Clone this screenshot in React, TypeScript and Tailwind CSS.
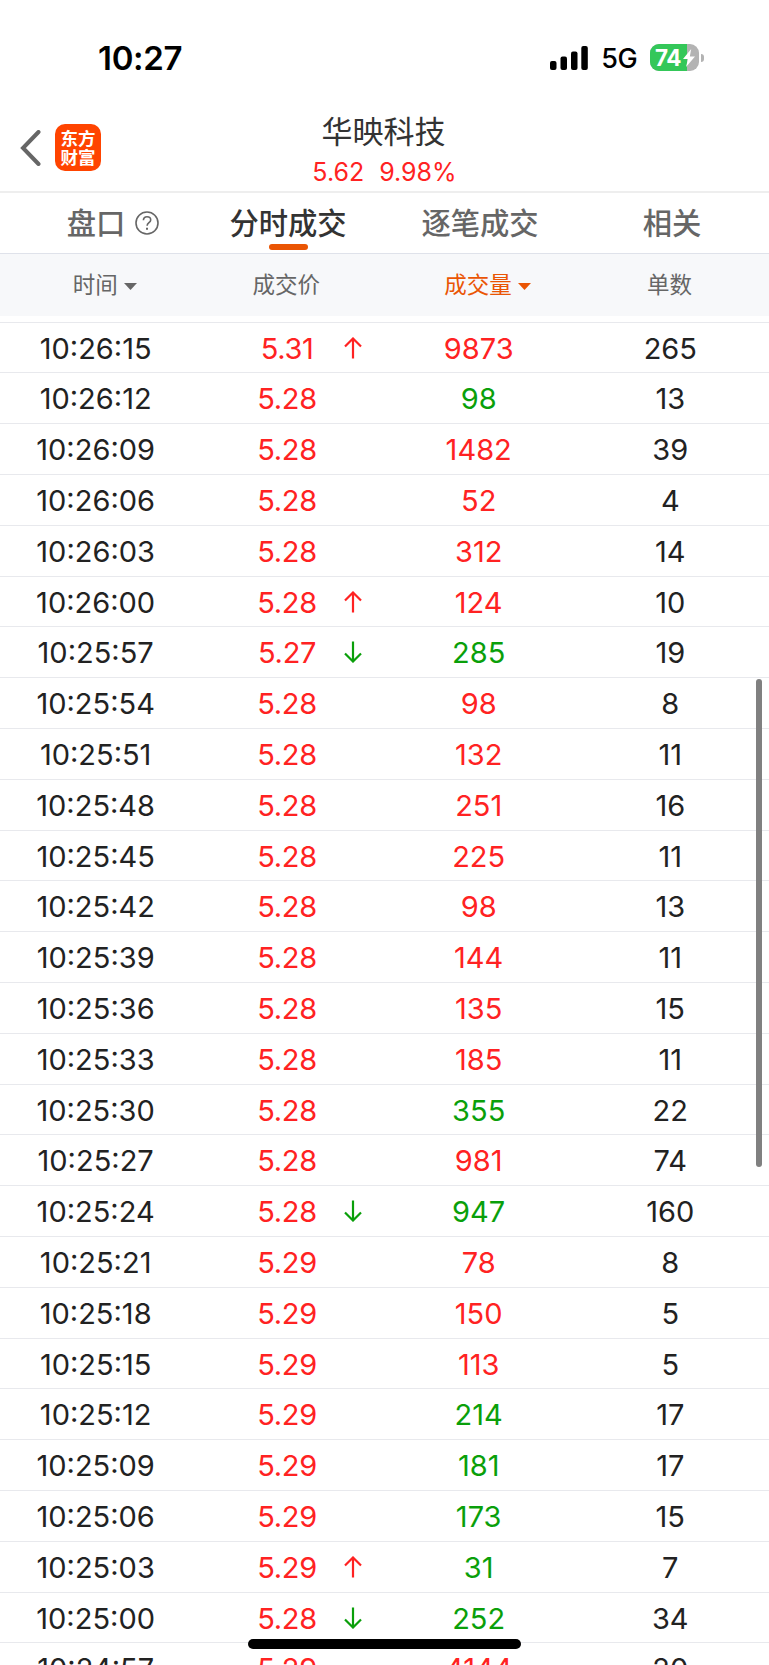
type Dir = "up" | "down" | ""
type Tick = [time: string, price: string, dir: Dir, volume: number, side: "buy" | "sell", count: number]

const ticks: Tick[] = [
  ["10:26:15", "5.31", "up", 9873, "buy", 265],
  ["10:26:12", "5.28", "", 98, "sell", 13],
  ["10:26:09", "5.28", "", 1482, "buy", 39],
  ["10:26:06", "5.28", "", 52, "buy", 4],
  ["10:26:03", "5.28", "", 312, "buy", 14],
  ["10:26:00", "5.28", "up", 124, "buy", 10],
  ["10:25:57", "5.27", "down", 285, "sell", 19],
  ["10:25:54", "5.28", "", 98, "buy", 8],
  ["10:25:51", "5.28", "", 132, "buy", 11],
  ["10:25:48", "5.28", "", 251, "buy", 16],
  ["10:25:45", "5.28", "", 225, "buy", 11],
  ["10:25:42", "5.28", "", 98, "buy", 13],
  ["10:25:39", "5.28", "", 144, "buy", 11],
  ["10:25:36", "5.28", "", 135, "buy", 15],
  ["10:25:33", "5.28", "", 185, "buy", 11],
  ["10:25:30", "5.28", "", 355, "sell", 22],
  ["10:25:27", "5.28", "", 981, "buy", 74],
  ["10:25:24", "5.28", "down", 947, "sell", 160],
  ["10:25:21", "5.29", "", 78, "buy", 8],
  ["10:25:18", "5.29", "", 150, "buy", 5],
  ["10:25:15", "5.29", "", 113, "buy", 5],
  ["10:25:12", "5.29", "", 214, "sell", 17],
  ["10:25:09", "5.29", "", 181, "sell", 17],
  ["10:25:06", "5.29", "", 173, "sell", 15],
  ["10:25:03", "5.29", "up", 31, "sell", 7],
  ["10:25:00", "5.28", "down", 252, "sell", 34],
  ["10:24:57", "5.29", "", 4144, "buy", 20],
]

export default function App() {
  return (
    <main className="relative flex h-[1665px] w-[769px] flex-col overflow-hidden bg-white font-['Inter','Noto_Sans_CJK_SC',sans-serif] text-[#222]">
      <StatusBar />
      <Header />
      <Tabs />
      <Columns />
      <div className="h-[5.6px] shrink-0" />
      <section>
        {ticks.map((t) => (
          <Row key={t[0]} tick={t} />
        ))}
      </section>

      {/* scrollbar + home indicator */}
      <div className="absolute top-[679px] right-[7px] h-[488px] w-[6px] rounded-full bg-[#808080]" />
      <div className="absolute bottom-[16px] left-[248px] h-[10px] w-[273px] rounded-full bg-black" />
    </main>
  )
}

function StatusBar() {
  return (
    <div className="flex h-[115px] shrink-0 items-center pr-[65px] pl-[98px] text-black">
      <span className="flex-1 pt-px text-[33px] leading-none font-semibold tracking-[-0.3px]">10:27</span>
      <svg className="mr-[13px]" width="38" height="24" viewBox="0 0 38 24">
        <rect x="0" y="15" width="6.5" height="9" rx="2" />
        <rect x="10.5" y="10.5" width="6.5" height="13.5" rx="2" />
        <rect x="21" y="5.5" width="6.5" height="18.5" rx="2" />
        <rect x="31.3" y="0" width="6.5" height="24" rx="2" />
      </svg>
      <span className="mr-[13px] pt-[2px] text-[27px] leading-none font-medium tracking-[-0.6px]">5G</span>
      <div className="relative h-[27px] w-[49px] overflow-hidden rounded-[9px] bg-[#b3b3b3]">
        <div className="h-full w-[37px] bg-[#34c759]" />
        <span className="absolute top-0 left-[5px] text-[22.5px] leading-[27px] font-bold tracking-[-0.6px] text-white">74</span>
        <svg className="absolute top-[5px] left-[33px]" width="12" height="18" viewBox="0 0 12 18">
          <path d="M8.2 0 0 10H5L3 18 12 7.4H6.8Z" fill="#fff" />
        </svg>
      </div>
      <div className="ml-[2px] h-[8px] w-[3px] rounded-r-full bg-[#b3b3b3]" />
    </div>
  )
}

function Header() {
  return (
    <header className="relative h-[78px] shrink-0 border-b-2 border-[#eee]">
      <div className="absolute top-[9px] left-[20px] flex items-center gap-[14px]">
        <svg width="21" height="36" viewBox="0 0 21 36" fill="none" stroke="#666" strokeWidth="4">
          <path d="M18.5 2 3 18 18.5 34" strokeLinecap="round" />
        </svg>
        <div className="flex h-[47px] w-[46px] flex-col items-center justify-center rounded-[10px] bg-[#ff4400] text-[17.5px] leading-[19px] font-bold text-white">
          <span>东方</span>
          <span>财富</span>
        </div>
      </div>
      <div className="flex flex-col items-center">
        <h1 className="mr-[2px] text-[31px] leading-[34px] text-[#333]">华映科技</h1>
        <div className="mt-[8px] flex gap-[15px] text-[25px] leading-[30px] text-[#f22]">
          <span>5.62</span>
          <span>9.98%</span>
        </div>
      </div>
    </header>
  )
}

function Tabs() {
  return (
    <nav className="grid h-[61px] w-full shrink-0 grid-cols-[192px_192px_192px_192px] border-b border-[#dfe2ea] text-[29.3px] leading-[62px] font-medium text-[#666]">
      <div className="text-center">
        <span className="relative">
          盘口
          <svg className="absolute top-[5px] left-[68px]" width="24" height="24" viewBox="0 0 24 24" fill="none" stroke="#666" strokeWidth="1.6">
            <circle cx="12" cy="12" r="11" />
            <path d="M8.4 9.3c0-2.2 1.5-3.6 3.6-3.6s3.7 1.3 3.7 3.2c0 2.7-3.6 2.9-3.6 5.8" />
            <path d="M12 16.7v2" strokeWidth="2" />
          </svg>
        </span>
      </div>
      <div className="relative text-center text-[#333]">
        分时成交
        <i className="absolute top-[51px] left-[77px] h-[6px] w-[39px] rounded-full bg-[#ea5504]" />
      </div>
      <div className="text-center">逐笔成交</div>
      <div className="text-center">相关</div>
    </nav>
  )
}

function Columns() {
  return (
    <div className="grid h-[62px] w-full shrink-0 grid-cols-[190.5px_191.6px_191.6px_191.6px] bg-[#f7f8fa] text-center text-[22.5px] leading-[62px] text-[#666]">
      <div>
        <span className="relative">时间<Caret /></span>
      </div>
      <div>成交价</div>
      <div className="text-[#ea5504]">
        <span className="relative">成交量<Caret /></span>
      </div>
      <div>单数</div>
    </div>
  )
}

function Caret() {
  return (
    <svg className="absolute top-[12px] left-full ml-[6px]" width="13" height="7" viewBox="0 0 13 7" fill="currentColor">
      <path d="M0 0H13L6.5 7Z" />
    </svg>
  )
}

function Row({ tick }: { tick: Tick }) {
  const [time, price, dir, volume, side, count] = tick
  return (
    <div className="grid h-[50.8px] grid-cols-[191.3px_191.6px_191.6px_191.6px] border-t-[1.5px] border-[#e8e9ed] text-center text-[29px] leading-[51.6px]">
      <div>{time}</div>
      <div className="relative tracking-[-0.3px] text-[#f22]">
        {price}
        {dir && <Arrow dir={dir} />}
      </div>
      <div className={side === "buy" ? "text-[#f22]" : "text-[#0a9f0a]"}>{volume}</div>
      <div>{count}</div>
    </div>
  )
}

function Arrow({ dir }: { dir: Dir }) {
  return (
    <svg className="absolute top-[14px] left-[153px]" width="18" height="22" viewBox="0 0 18 22" fill="none" stroke={dir === "up" ? "#f22" : "#0a9f0a"} strokeWidth="2.2">
      <path d={dir === "up" ? "M9 21.5V1.5M1 9.5 9 1.5 17 9.5" : "M9 .5V20.5M1 12.5 9 20.5 17 12.5"} />
    </svg>
  )
}
